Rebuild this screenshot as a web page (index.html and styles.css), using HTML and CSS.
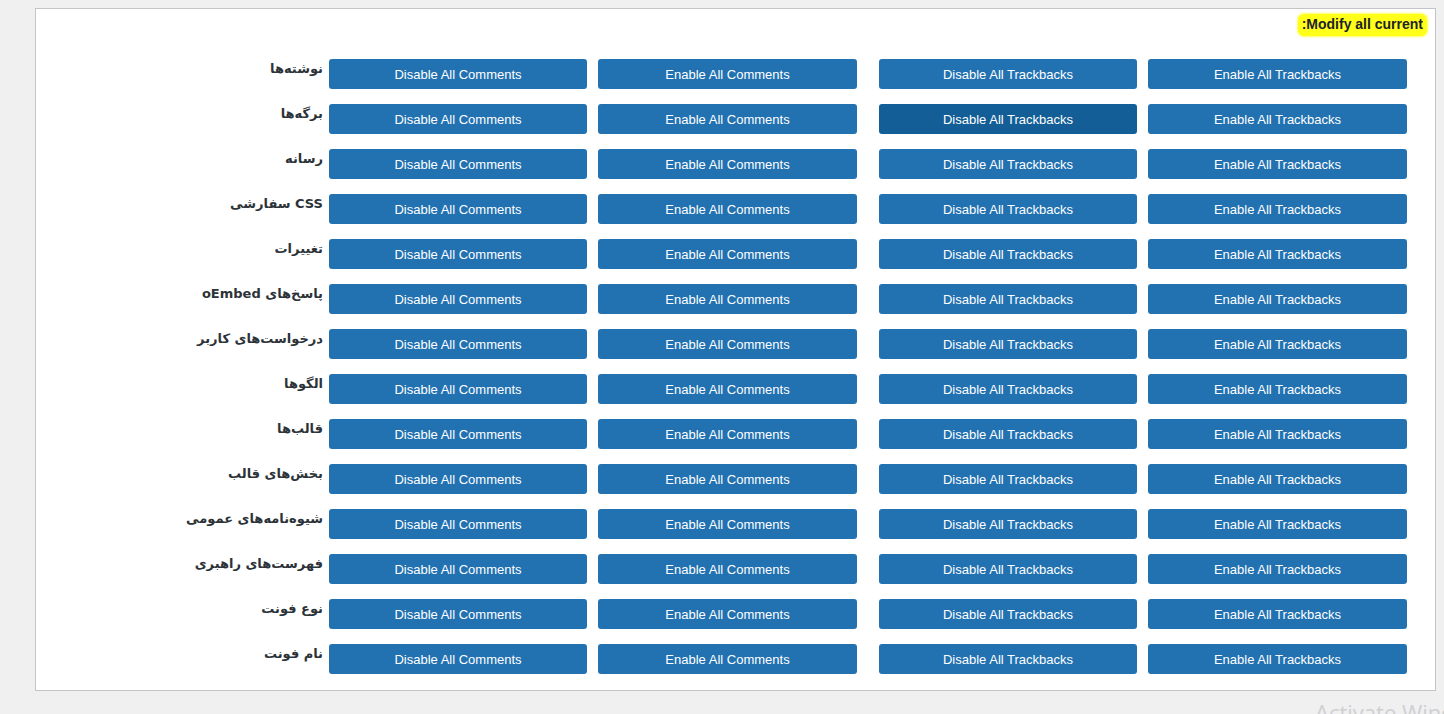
FILE: index.html
```html
<!DOCTYPE html>
<html lang="fa">
<head>
<meta charset="utf-8">
<title>Modify all current</title>
<link rel="stylesheet" href="styles.css">
</head>
<body>
<div class="panel">
  <div class="head"><span class="mark" dir="rtl">Modify all current:</span></div>
  <div class="rows">
    <div class="row"><div class="label" dir="rtl">نوشته‌ها</div><button class="btn c1">Disable All Comments</button><button class="btn c2">Enable All Comments</button><button class="btn c3">Disable All Trackbacks</button><button class="btn c4">Enable All Trackbacks</button></div>
    <div class="row"><div class="label" dir="rtl">برگه‌ها</div><button class="btn c1">Disable All Comments</button><button class="btn c2">Enable All Comments</button><button class="btn c3 hover">Disable All Trackbacks</button><button class="btn c4">Enable All Trackbacks</button></div>
    <div class="row"><div class="label" dir="rtl">رسانه</div><button class="btn c1">Disable All Comments</button><button class="btn c2">Enable All Comments</button><button class="btn c3">Disable All Trackbacks</button><button class="btn c4">Enable All Trackbacks</button></div>
    <div class="row"><div class="label" dir="rtl">CSS سفارشی</div><button class="btn c1">Disable All Comments</button><button class="btn c2">Enable All Comments</button><button class="btn c3">Disable All Trackbacks</button><button class="btn c4">Enable All Trackbacks</button></div>
    <div class="row"><div class="label" dir="rtl">تغییرات</div><button class="btn c1">Disable All Comments</button><button class="btn c2">Enable All Comments</button><button class="btn c3">Disable All Trackbacks</button><button class="btn c4">Enable All Trackbacks</button></div>
    <div class="row"><div class="label" dir="rtl">پاسخ‌های oEmbed</div><button class="btn c1">Disable All Comments</button><button class="btn c2">Enable All Comments</button><button class="btn c3">Disable All Trackbacks</button><button class="btn c4">Enable All Trackbacks</button></div>
    <div class="row"><div class="label" dir="rtl">درخواست‌های کاربر</div><button class="btn c1">Disable All Comments</button><button class="btn c2">Enable All Comments</button><button class="btn c3">Disable All Trackbacks</button><button class="btn c4">Enable All Trackbacks</button></div>
    <div class="row"><div class="label" dir="rtl">الگوها</div><button class="btn c1">Disable All Comments</button><button class="btn c2">Enable All Comments</button><button class="btn c3">Disable All Trackbacks</button><button class="btn c4">Enable All Trackbacks</button></div>
    <div class="row"><div class="label" dir="rtl">قالب‌ها</div><button class="btn c1">Disable All Comments</button><button class="btn c2">Enable All Comments</button><button class="btn c3">Disable All Trackbacks</button><button class="btn c4">Enable All Trackbacks</button></div>
    <div class="row"><div class="label" dir="rtl">بخش‌های قالب</div><button class="btn c1">Disable All Comments</button><button class="btn c2">Enable All Comments</button><button class="btn c3">Disable All Trackbacks</button><button class="btn c4">Enable All Trackbacks</button></div>
    <div class="row"><div class="label" dir="rtl">شیوه‌نامه‌های عمومی</div><button class="btn c1">Disable All Comments</button><button class="btn c2">Enable All Comments</button><button class="btn c3">Disable All Trackbacks</button><button class="btn c4">Enable All Trackbacks</button></div>
    <div class="row"><div class="label" dir="rtl">فهرست‌های راهبری</div><button class="btn c1">Disable All Comments</button><button class="btn c2">Enable All Comments</button><button class="btn c3">Disable All Trackbacks</button><button class="btn c4">Enable All Trackbacks</button></div>
    <div class="row"><div class="label" dir="rtl">نوع فونت</div><button class="btn c1">Disable All Comments</button><button class="btn c2">Enable All Comments</button><button class="btn c3">Disable All Trackbacks</button><button class="btn c4">Enable All Trackbacks</button></div>
    <div class="row"><div class="label" dir="rtl">نام فونت</div><button class="btn c1">Disable All Comments</button><button class="btn c2">Enable All Comments</button><button class="btn c3">Disable All Trackbacks</button><button class="btn c4">Enable All Trackbacks</button></div>
  </div>
</div>
<div class="watermark">Activate Windows</div>
</body>
</html>
```

FILE: styles.css
```css
html, body {
  margin: 0;
  padding: 0;
}
body {
  background: #f0f0f1;
  font-family: "Liberation Sans", Arial, sans-serif;
  width: 1444px;
  height: 714px;
  overflow: hidden;
  position: relative;
}
.panel {
  margin: 8px 0 0 35px;
  width: 1399px;
  height: 681px;
  background: #fff;
  border: 1px solid #c3c4c7;
  box-sizing: content-box;
  padding: 0;
}
.head {
  display: flex;
  justify-content: flex-end;
  padding: 5px 8px 0 0;
  height: 22px;
}
.mark {
  background: #ffff1a;
  color: #1d2327;
  font-weight: bold;
  font-size: 14px;
  line-height: 21px;
  padding: 0 4px;
  border-radius: 6px;
  box-shadow: 0 0 2px 1px #ffff60;
}
.rows {
  display: flex;
  flex-direction: column;
  gap: 15px;
  margin-top: 23px;
  padding-right: 28px;
}
.row {
  display: flex;
  height: 30px;
}
.label {
  flex: 1;
  text-align: right;
  padding: 0 6px 0 0;
  font-family: "DejaVu Sans", sans-serif;
  font-weight: bold;
  font-size: 13px;
  line-height: 19px;
  color: #2c3338;
}
.btn {
  height: 30px;
  border: none;
  border-radius: 3px;
  background: #2271b1;
  color: #fff;
  font-family: "Liberation Sans", Arial, sans-serif;
  font-size: 13px;
  padding: 0;
  cursor: pointer;
}
.btn.hover {
  background: #135e96;
}
.c1 { width: 258px; }
.c2 { width: 259px; margin-left: 11px; }
.c3 { width: 258px; margin-left: 22px; }
.c4 { width: 259px; margin-left: 11px; }
.watermark {
  position: absolute;
  left: 1315px;
  top: 697px;
  font-family: "Open Sans", sans-serif;
  font-size: 22px;
  color: #cfcfd1;
  white-space: nowrap;
}
```
